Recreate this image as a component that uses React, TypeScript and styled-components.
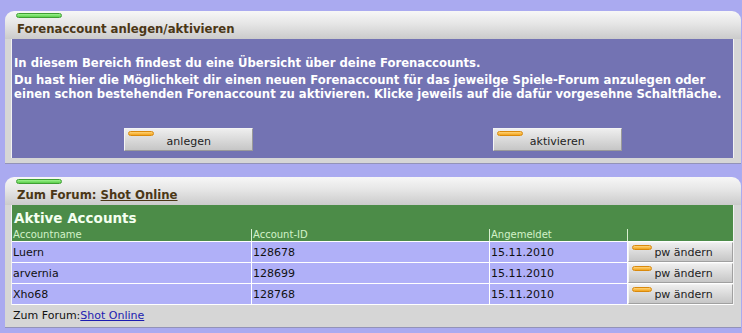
import React from "react";
import styled, { createGlobalStyle } from "styled-components";

const GlobalStyle = createGlobalStyle`
  html, body { margin: 0; padding: 0; }
  body {
    background: #aaaaf0;
    font-family: "DejaVu Sans", Verdana, sans-serif;
    width: 742px;
    height: 333px;
    overflow: hidden;
  }
`;

const Page = styled.div`
  padding: 11px 1px 0 5px;
  display: flex;
  flex-direction: column;
  gap: 13px;
`;

const Box = styled.section`
  display: flex;
  flex-direction: column;
`;

const BoxHeader = styled.div`
  position: relative;
  height: 28px;
  box-sizing: border-box;
  padding: 11px 0 3px 12px;
  border-radius: 9px 9px 0 0;
  background: linear-gradient(#f7f7f7 0%, #e6e6e6 45%, #cbcbcb 100%);
  font-weight: bold;
  font-size: 11.7px;
  line-height: 14px;
  color: #4b3716;
  white-space: nowrap;
`;

const Pill = styled.span<{ $w: number; $h: number; $kind: "green" | "orange" }>`
  position: absolute;
  left: ${(p) => (p.$kind === "green" ? 11 : 3)}px;
  top: 2px;
  width: ${(p) => p.$w}px;
  height: ${(p) => p.$h}px;
  box-sizing: border-box;
  border-radius: 3px;
  border: 1px solid ${(p) => (p.$kind === "green" ? "#3f9f34" : "#d9890c")};
  background: ${(p) =>
    p.$kind === "green"
      ? "linear-gradient(#9cf28c, #5ccf4c)"
      : "linear-gradient(#ffd47a, #f2a41c)"};
`;

const HeaderLink = styled.a`
  color: #4b3716;
  text-decoration: underline;
`;

const Frame = styled.div<{ $bottom: number }>`
  background: #d6d6d6;
  padding: 0 7px ${(p) => p.$bottom}px 6px;
  border-bottom: 1px solid #9393b8;
`;

const Inner = styled.div`
  border-left: 1px solid #f2f2f2;
  border-right: 1px solid #f2f2f2;
`;

const Panel = styled.div`
  background: #7373b3;
  padding: 17px 8px 7px 2px;
  color: #ffffff;
  font-weight: bold;
  font-size: 11.65px;
  line-height: 14px;
`;

const Para = styled.p<{ $mb: number }>`
  margin: 0 0 ${(p) => p.$mb}px 0;
`;

const ButtonRow = styled.div`
  display: grid;
  grid-template-columns: 1fr 1fr;
  column-gap: 19px;
  justify-items: center;
  margin-right: -7px;
`;

const BigButton = styled.button`
  position: relative;
  width: 129px;
  height: 23px;
  box-sizing: border-box;
  padding: 4px 0 0 0;
  border: 1px solid;
  border-color: #f4f4f4 #9a9a9a #9a9a9a #f4f4f4;
  background: linear-gradient(#eeeeee, #c6c6c6);
  font-family: "DejaVu Sans", Verdana, sans-serif;
  font-size: 11px;
  line-height: 16px;
  color: #222222;
  text-align: center;
  vertical-align: top;
`;

const GreenHead = styled.div`
  background: #4c8c48;
`;

const TableTitle = styled.div`
  padding: 4px 0 2px 2px;
  font-weight: bold;
  font-size: 13.5px;
  line-height: 18px;
  color: #f4fff0;
`;

const Row = styled.div<{ $head?: boolean }>`
  display: grid;
  grid-template-columns: 239px 238px 138px 1fr;
  background: ${(p) => (p.$head ? "transparent" : "#b0b0f8")};
  border-top: ${(p) => (p.$head ? "none" : "1px solid #ffffff")};
  height: ${(p) => (p.$head ? 12 : 21)}px;
  box-sizing: border-box;
`;

const EndLine = styled.div`
  height: 1px;
  background: #ffffff;
`;

const Cell = styled.div<{ $head?: boolean; $first?: boolean }>`
  box-sizing: border-box;
  border-left: ${(p) =>
    p.$first ? "none" : p.$head ? "1px solid #d8efd0" : "1px solid #ffffff"};
  padding: ${(p) => (p.$head ? "0 1px" : "2px 1px 0 1px")};
  font-size: ${(p) => (p.$head ? 10 : 11)}px;
  line-height: ${(p) => (p.$head ? 12 : 18)}px;
  color: ${(p) => (p.$head ? "#d2f2c8" : "#111111")};
  white-space: nowrap;
  overflow: hidden;
`;

const ActionCell = styled.div`
  box-sizing: border-box;
  border-left: 1px solid #ffffff;
  display: flex;
`;

const SmallButton = styled.button`
  position: relative;
  flex: 1;
  height: 20px;
  box-sizing: border-box;
  padding: 0 0 0 6px;
  border: 1px solid;
  border-color: #f4f4f4 #a0a0a0 #a0a0a0 #f4f4f4;
  background: linear-gradient(#eeeeee, #c6c6c6);
  font-family: "DejaVu Sans", Verdana, sans-serif;
  font-size: 11px;
  line-height: 17px;
  color: #222222;
  text-align: center;
`;

const Footer = styled.div`
  height: 22px;
  box-sizing: border-box;
  padding: 2px 2px 0 2px;
  font-size: 11px;
  line-height: 18px;
  color: #111111;
`;

const FooterLink = styled.a`
  color: #1c1cb0;
  text-decoration: underline;
`;

const accounts = [
  { name: "Luern", id: "128678", date: "15.11.2010" },
  { name: "arvernia", id: "128699", date: "15.11.2010" },
  { name: "Xho68", id: "128768", date: "15.11.2010" },
];

export default function App() {
  return (
    <>
      <GlobalStyle />
      <Page>
        <Box>
          <BoxHeader>
            <Pill $kind="green" $w={46} $h={5} />
            Forenaccount anlegen/aktivieren
          </BoxHeader>
          <Frame $bottom={5}>
            <Inner>
              <Panel>
                <Para $mb={3}>
                  In diesem Bereich findest du eine Übersicht über deine Forenaccounts.
                </Para>
                <Para $mb={27}>
                  Du hast hier die Möglichkeit dir einen neuen Forenaccount für das jeweilge
                  Spiele-Forum anzulegen oder einen schon bestehenden Forenaccount zu
                  aktivieren. Klicke jeweils auf die dafür vorgesehne Schaltfläche.
                </Para>
                <ButtonRow>
                  <BigButton>
                    <Pill $kind="orange" $w={26} $h={5} />
                    anlegen
                  </BigButton>
                  <BigButton>
                    <Pill $kind="orange" $w={26} $h={5} />
                    aktivieren
                  </BigButton>
                </ButtonRow>
              </Panel>
            </Inner>
          </Frame>
        </Box>

        <Box>
          <BoxHeader>
            <Pill $kind="green" $w={46} $h={5} />
            Zum Forum: <HeaderLink href="#">Shot Online</HeaderLink>
          </BoxHeader>
          <Frame $bottom={0}>
            <Inner>
              <GreenHead>
                <TableTitle>Aktive Accounts</TableTitle>
                <Row $head>
                  <Cell $head $first>Accountname</Cell>
                  <Cell $head>Account-ID</Cell>
                  <Cell $head>Angemeldet</Cell>
                  <Cell $head></Cell>
                </Row>
              </GreenHead>
              {accounts.map((a) => (
                <Row key={a.id}>
                  <Cell $first>{a.name}</Cell>
                  <Cell>{a.id}</Cell>
                  <Cell>{a.date}</Cell>
                  <ActionCell>
                    <SmallButton>
                      <Pill $kind="orange" $w={20} $h={5} />
                      pw ändern
                    </SmallButton>
                  </ActionCell>
                </Row>
              ))}
              <EndLine />
            </Inner>
            <Footer>
              Zum Forum:<FooterLink href="#">Shot Online</FooterLink>
            </Footer>
          </Frame>
        </Box>
      </Page>
    </>
  );
}
